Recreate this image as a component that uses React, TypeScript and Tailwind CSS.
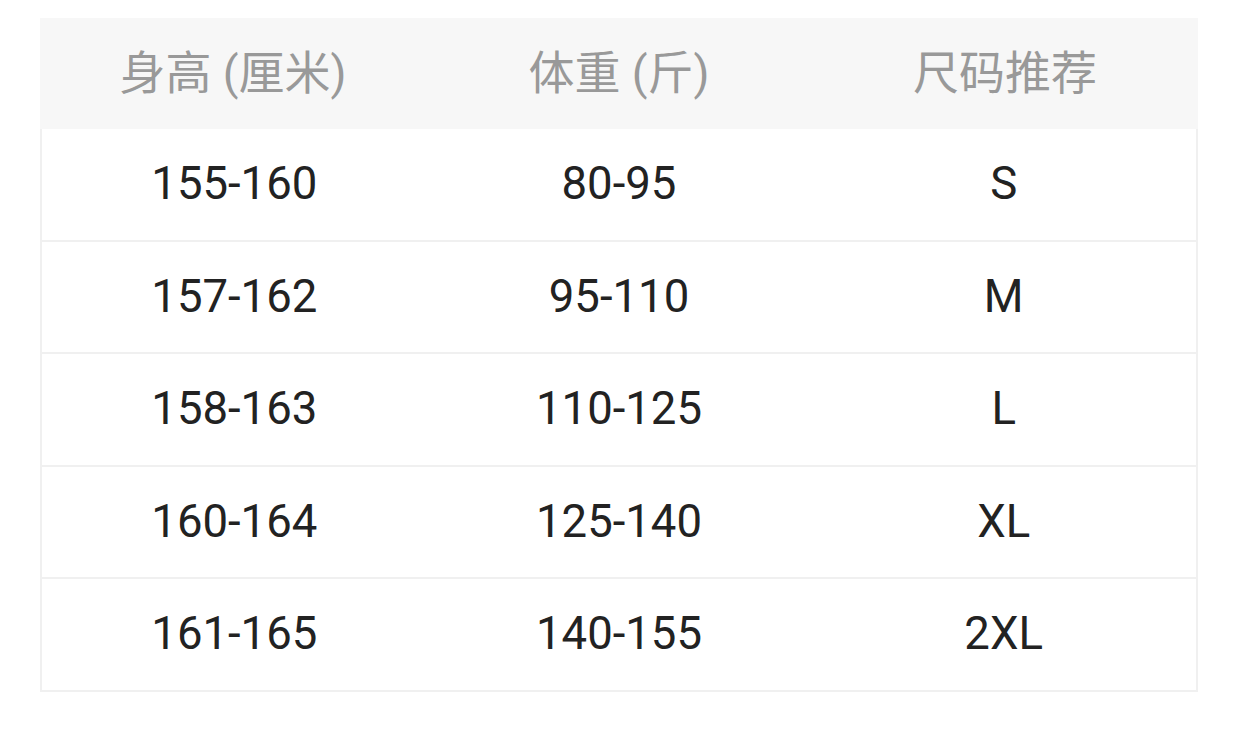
import React from "react";

const rows = [
  ["155-160", "80-95", "S"],
  ["157-162", "95-110", "M"],
  ["158-163", "110-125", "L"],
  ["160-164", "125-140", "XL"],
  ["161-165", "140-155", "2XL"],
];

export default function App() {
  return (
    <div
      className="w-[1238px] h-[736px] bg-white pt-[18px] pl-[40px]"
      style={{ fontFamily: 'Roboto, "Noto Sans CJK SC", sans-serif' }}
    >
      <div className="w-[1158px]">
        <div className="grid grid-cols-3 h-[111px] bg-[#f7f7f7] text-[#999999] text-[46px] items-center">
          <div className="text-center">身高 (厘米)</div>
          <div className="text-center">体重 (斤)</div>
          <div className="text-center">尺码推荐</div>
        </div>
        <div className="border-x-2 border-[#f0f0f0]">
          {rows.map((r, i) => (
            <div
              key={i}
              className="grid grid-cols-3 h-[112.5px] border-b-2 border-[#f0f0f0] items-center text-[45.5px] text-[#222222]"
            >
              {r.map((c, j) => (
                <div key={j} className="text-center">
                  {c}
                </div>
              ))}
            </div>
          ))}
        </div>
      </div>
    </div>
  );
}
